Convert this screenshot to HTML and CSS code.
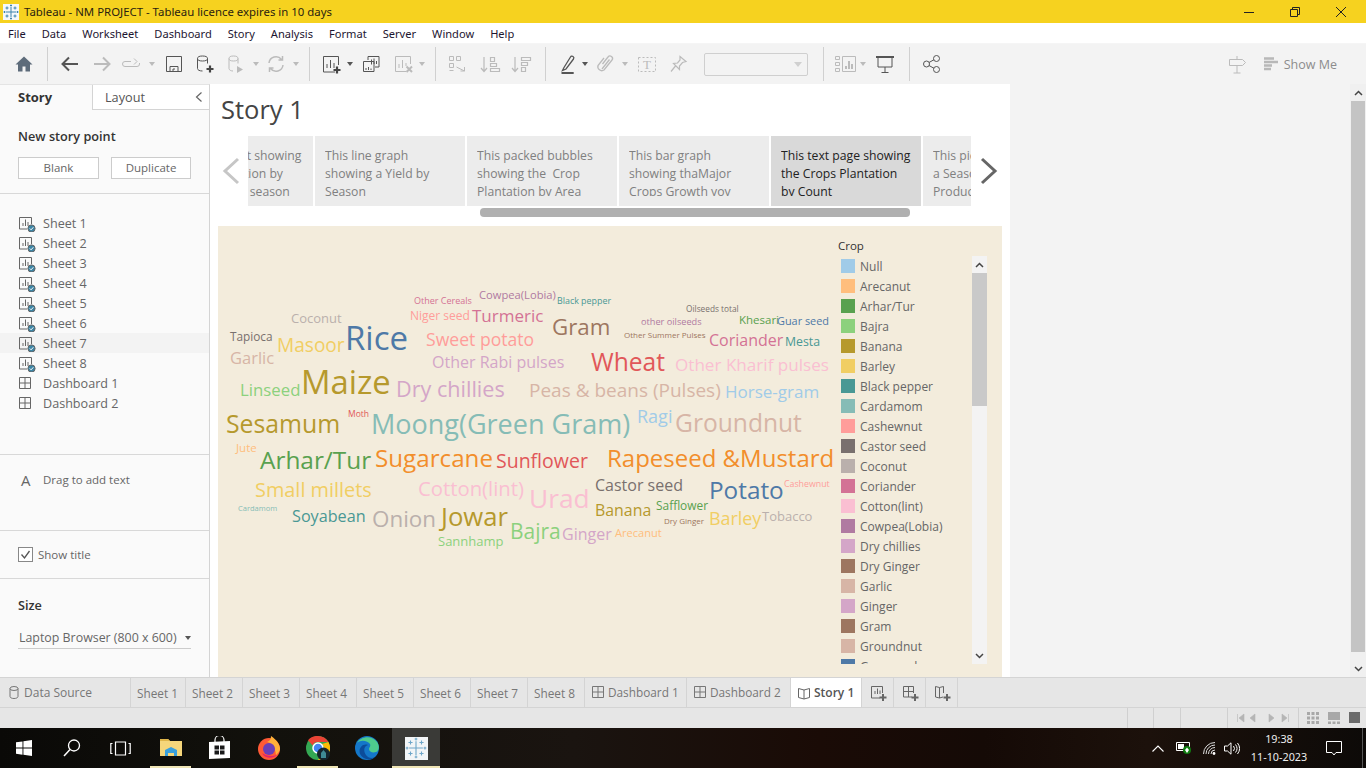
FILE: index.html
```html
<!DOCTYPE html>
<html lang="en">
<head>
<meta charset="utf-8">
<title>Tableau - NM PROJECT</title>
<link rel="stylesheet" href="styles.css">
</head>
<body>
<svg class="defs" aria-hidden="true">
  <symbol id="logo" viewBox="0 0 16 16">
    <path d="M8 3v10M3 8h10M8 0.5v2M7 1.5h2M8 13.5v2M7 14.5h2M0.5 8h2M1.5 7v2M13.5 8h2M14.5 7v2M4 2.5v3M2.500 4h3M12 2.500v3M10.500 4h3M4 10.500v3M2.500 12h3M12 10.500v3M10.500 12h3"/>
  </symbol>
  <symbol id="sheet" viewBox="0 0 18 18">
    <path d="M9 15H1.500V3.500h12V10M5 12V9M7.500 12V5.500M10 12V8" fill="none" stroke="#666"/>
    <circle cx="13.500" cy="14.500" r="3.600" fill="#3d85a5"/>
    <path d="M11.800 14.500l1.300 1.300 2.200-2.500" fill="none" stroke="#fff" stroke-width="1"/>
  </symbol>
  <symbol id="dash" viewBox="0 0 14 14">
    <path d="M1.500 1.500h11v11h-11zM7 1.500v11M1.500 7h11" fill="none"/>
  </symbol>
</svg>

<header class="titlebar">
  <svg class="logo-sm" width="16" height="16"><use href="#logo"/></svg>
  <span class="title-text">Tableau - NM PROJECT - Tableau licence expires in 10 days</span>
  <div class="winbtns">
    <span class="winbtn"><svg width="12" height="12"><path d="M1 6.500h10" stroke="#222" fill="none"/></svg></span>
    <span class="winbtn"><svg width="12" height="12"><path d="M1.500 3.500h7v7h-7zM3.500 3.500v-2h7v7h-2" stroke="#222" fill="none"/></svg></span>
    <span class="winbtn"><svg width="12" height="12"><path d="M1 1l10 10M11 1L1 11" stroke="#222" fill="none"/></svg></span>
  </div>
</header>

<nav class="menubar">
  <span>File</span><span>Data</span><span>Worksheet</span><span>Dashboard</span><span>Story</span><span>Analysis</span><span>Format</span><span>Server</span><span>Window</span><span>Help</span>
</nav>

<div class="toolbar">
  <span class="tb w32 first"><svg width="24" height="24"><path d="M12 4.500L3.500 12.500H6V19.500h4.500v-5h3v5H18V12.500h2.500z" fill="#5d6b7a"/></svg></span>
  <i class="sep s7"></i>
  <span class="tb w32 g6"><svg class="on" width="24" height="24"><path d="M20 12H4.500M11 5.500L4.500 12l6.500 6.500" stroke-width="2"/></svg></span>
  <span class="tb w32"><svg class="off" width="24" height="24"><path d="M4 12h15.500M13 5.500l6.500 6.500-6.500 6.500" stroke-width="2"/></svg></span>
  <span class="tb w26"><svg class="off" width="24" height="24"><path d="M12 9.500H6a2.500 2.500 0 0 0 0 5h12a2.500 2.500 0 0 0 2.500-2.500v-1M15 6.500l3 3-3 3"/></svg></span>
  <span class="tb w16"><i class="caret off-c"></i></span>
  <span class="tb w28"><svg class="on" width="24" height="24"><path d="M4.500 4.500h15v15h-15zM8 19.500v-5h8v5M11 19.500v-2.500h2"/></svg></span>
  <span class="tb w34"><svg class="on" width="24" height="24"><path d="M4.500 6.500v10c0 1.500 2 2.500 5 2.500M14.500 6.500v5"/><ellipse cx="9.500" cy="6.500" rx="5" ry="2.500"/><path class="thick" d="M17 13.500v7M13.500 17h7"/></svg></span>
  <span class="tb w26"><svg class="off" width="24" height="24"><path d="M6 6.500v10c0 1.500 2 2.500 4 2.500M15 6.500v5"/><ellipse cx="10.500" cy="6.500" rx="4.500" ry="2.500"/><path class="fillc" d="M14 14l6 3.500-6 3.500z"/></svg></span>
  <span class="tb w16"><i class="caret off-c"></i></span>
  <span class="tb w24"><svg class="off" width="24" height="24"><path d="M5 11a7 7 0 0 1 12.500-3.500M19 13a7 7 0 0 1-12.500 3.500M18.500 4v4h-4M5.500 20v-4h4" stroke-width="1.500"/></svg></span>
  <span class="tb w16"><i class="caret off-c"></i></span>
  <i class="sep s5"></i>
  <span class="tb w34 ml4"><svg class="on" width="24" height="24"><path d="M16 20H4.500V4.500h15V13M8 16v-4M11.500 16V8M15 16v-5"/><path class="thick" d="M18 14.500v7M14.500 18h7"/></svg></span>
  <span class="tb w4"><i class="caret on-c"></i></span>
  <span class="tb w38"><svg class="on" width="24" height="24"><path d="M9 8V4.500h11V15h-4M4.500 9.500H15v10H4.500zM12.500 12.500v-5M15 12V6.500M17.500 12V9M7 18v-2M9.500 18v-3M12 18v-1.500"/></svg></span>
  <span class="tb w26"><svg class="off" width="24" height="24"><path d="M15 19.500H4.500v-15h15V12M8 16v-4M11.500 16V8M15 14v-3"/><path stroke-width="2" d="M15.500 14.500l5.500 5.500M21 14.500L15.500 20"/></svg></span>
  <span class="tb w12"><i class="caret off-c"></i></span>
  <i class="sep s7"></i>
  <span class="tb w42"><svg class="off" width="24" height="24"><path d="M4.500 4.500h4v4h-4zM11.500 4.500h4v4h-4zM4.500 11.500h4v4h-4zM4.500 18.500h4M11.500 15l8 4M19.500 19v-4M19.500 19h-4"/></svg></span>
  <span class="tb w24"><svg class="off" width="24" height="24"><path d="M6 5v14M3 16l3 3.500L9 16M12.500 5.500h4v4h-4zM12.500 11.500h6v3h-6zM12.500 16.500h9v3h-9z" stroke-width="1.200"/></svg></span>
  <span class="tb w38"><svg class="off" width="24" height="24"><path d="M6 5v14M3 16l3 3.500L9 16M12.500 5.500h9v3h-9zM12.500 10.500h6v3h-6zM12.500 15.500h4v4h-4z" stroke-width="1.200"/></svg></span>
  <i class="sep s5"></i>
  <span class="tb w28 ml8"><svg class="on" width="24" height="24"><path d="M8 15.500l-1.500 3 3.500-1.500L17.500 7a1.800 1.800 0 0 0-3-2zM6 21h11.500" stroke-width="1.300"/><path d="M5.500 21h12" stroke-width="2"/></svg></span>
  <span class="tb w6"><i class="caret on-c"></i></span>
  <span class="tb w34"><svg class="off" width="24" height="24"><path d="M9.500 12L15 5a2.500 2.500 0 0 1 4 3l-8 10a4 4 0 0 1-6-4.500L11 6M9 17l7.500-9.500" stroke-width="1.300"/></svg></span>
  <span class="tb w6"><i class="caret off-c"></i></span>
  <span class="tb w38"><svg class="off" width="24" height="24"><path d="M3.500 5.500h17v14h-17z" stroke-dasharray="2 2"/><text x="12" y="17" class="t-icon">T</text></svg></span>
  <span class="tb w22"><svg class="off" width="24" height="24"><path d="M14 4.500l6 5-3.500 1-3 3.500 0 3.500-6-6 4-.5 2.500-3zM9.500 14L5 19.500" stroke-width="1.200"/></svg></span>
  <div class="fake-select"><i class="caret sel-c"></i></div>
  <i class="sep s15"></i>
  <span class="tb w24 ml10"><svg class="off" width="24" height="24"><path d="M1.500 4.500h4v3h-4zM1.500 10.500h4v3h-4zM1.500 16.500h4v3h-4zM8.500 4.500h13v15h-13z"/><path stroke-width="2" d="M12 17v-3M15 17V9M18 17v-5"/></svg></span>
  <span class="tb w10"><i class="caret off-c"></i></span>
  <span class="tb w34"><svg class="on" width="24" height="24"><path d="M3 5h18" stroke-width="2"/><path d="M5 5v10h14V5M12 15v5M8.500 20.500h7"/></svg></span>
  <i class="sep s7"></i>
  <span class="tb w44"><svg class="on" width="24" height="24"><circle cx="6.500" cy="12" r="3"/><circle cx="16.500" cy="6.500" r="3"/><circle cx="16.500" cy="17.500" r="3"/><path d="M9 10.500l5-2.800M9 13.500l5 2.800"/></svg></span>
  <div class="tb-right">
    <span class="tb w24"><svg class="off" width="24" height="24"><path d="M4.500 7.500h13l3 3-3 3h-13zM12 4v3.500M12 13.500V21M8.500 21h7"/></svg></span>
    <span class="showme"><svg width="14" height="14"><path d="M0 1.500h10M0 5h14M0 8.500h8M0 12h7" stroke="#b8b8b8" stroke-width="2.500" fill="none"/></svg>Show Me</span>
  </div>
</div>

<main class="workspace">
  <aside class="sidebar">
    <div class="side-tabs">
      <span class="side-tab active">Story</span>
      <span class="side-tab">Layout<svg class="collapse" width="8" height="12"><path d="M6.500 1.500L1.500 6l5 4.500" stroke="#666" stroke-width="1.200" fill="none"/></svg></span>
    </div>
    <section class="side-new">
      <h2 class="side-h">New story point</h2>
      <div class="btn-row"><span class="btn b-blank">Blank</span><span class="btn b-dup">Duplicate</span></div>
    </section>
    <section class="side-list">
      <div class="row"><span class="sh"><svg width="18" height="18"><use href="#sheet"/></svg></span>Sheet 1</div>
      <div class="row"><span class="sh"><svg width="18" height="18"><use href="#sheet"/></svg></span>Sheet 2</div>
      <div class="row"><span class="sh"><svg width="18" height="18"><use href="#sheet"/></svg></span>Sheet 3</div>
      <div class="row"><span class="sh"><svg width="18" height="18"><use href="#sheet"/></svg></span>Sheet 4</div>
      <div class="row"><span class="sh"><svg width="18" height="18"><use href="#sheet"/></svg></span>Sheet 5</div>
      <div class="row"><span class="sh"><svg width="18" height="18"><use href="#sheet"/></svg></span>Sheet 6</div>
      <div class="row hover"><span class="sh"><svg width="18" height="18"><use href="#sheet"/></svg></span>Sheet 7</div>
      <div class="row"><span class="sh"><svg width="18" height="18"><use href="#sheet"/></svg></span>Sheet 8</div>
      <div class="row"><span class="sh"><svg width="14" height="14"><use href="#dash"/></svg></span>Dashboard 1</div>
      <div class="row"><span class="sh"><svg width="14" height="14"><use href="#dash"/></svg></span>Dashboard 2</div>
    </section>
    <section class="side-text"><span class="big-a">A</span>Drag to add text</section>
    <section class="side-show"><span class="check"><svg width="13" height="13"><path d="M2.500 6.500l3 3.500 5-7" stroke="#555" stroke-width="1.300" fill="none"/></svg></span>Show title</section>
    <section class="side-size">
      <h2 class="side-h">Size</h2>
      <div class="size-select">Laptop Browser (800 x 600)<i class="caret on-c"></i></div>
    </section>
  </aside>

  <section class="story">
    <h1 class="story-title">Story 1</h1>
    <div class="story-nav">
      <svg class="nav-l" width="18" height="28"><path d="M16 2L3 14l13 12" stroke="#c6c6c6" stroke-width="3" fill="none"/></svg>
      <div class="points-wrap">
        <div class="points">
          <div class="point"><p>This bar chart showing<br>Crop Production by<br>Crop Area by season</p></div>
          <div class="point"><p>This line graph<br>showing a Yield by<br>Season</p></div>
          <div class="point"><p>This packed bubbles<br>showing the&nbsp; Crop<br>Plantation by Area</p></div>
          <div class="point"><p>This bar graph<br>showing thaMajor<br>Crops Growth yoy</p></div>
          <div class="point current"><p>This text page showing<br>the Crops Plantation<br>by Count</p></div>
          <div class="point"><p>This pie chart showing<br>a Seasonal Crop<br>Production</p></div>
        </div>
        <div class="hbar"><i></i></div>
      </div>
      <svg class="nav-r" width="18" height="28"><path d="M2 2l13 12L2 26" stroke="#666" stroke-width="3" fill="none"/></svg>
    </div>
    <div class="canvas">
      <div class="cloud">
        <span class="w c-cori" style="left:196px;top:74px;font-size:9px">Other Cereals</span>
        <span class="w c-cowp" style="left:261px;top:69px;font-size:11.200px">Cowpea(Lobia)</span>
        <span class="w c-teal" style="left:339px;top:75px;font-size:8.900px">Black pepper</span>
        <span class="w c-grey" style="left:468px;top:83px;font-size:8.300px">Oilseeds total</span>
        <span class="w c-coco" style="left:73px;top:92px;font-size:13px">Coconut</span>
        <span class="w c-cash" style="left:192px;top:90px;font-size:12px">Niger seed</span>
        <span class="w c-cori" style="left:254px;top:89px;font-size:17px">Turmeric</span>
        <span class="w c-brown" style="left:334px;top:101px;font-size:22.300px">Gram</span>
        <span class="w c-cowp" style="left:423px;top:96px;font-size:9.200px">other oilseeds</span>
        <span class="w c-brown" style="left:406px;top:109px;font-size:8px">Other Summer Pulses</span>
        <span class="w c-green" style="left:521px;top:94px;font-size:11.500px">Khesari</span>
        <span class="w c-blue" style="left:559px;top:95px;font-size:10.900px">Guar seed</span>
        <span class="w c-grey" style="left:12px;top:111px;font-size:11.800px">Tapioca</span>
        <span class="w c-blue" style="left:127px;top:111px;font-size:33px">Rice</span>
        <span class="w c-barley" style="left:59px;top:120px;font-size:19.100px">Masoor</span>
        <span class="w c-cash" style="left:208px;top:114px;font-size:17.600px">Sweet potato</span>
        <span class="w c-cori" style="left:491px;top:114px;font-size:16px">Coriander</span>
        <span class="w c-teal" style="left:567px;top:116px;font-size:12.300px">Mesta</span>
        <span class="w c-tan" style="left:12px;top:132px;font-size:16.500px">Garlic</span>
        <span class="w c-mauve" style="left:214px;top:136px;font-size:16px">Other Rabi pulses</span>
        <span class="w c-red" style="left:373px;top:136px;font-size:24.600px">Wheat</span>
        <span class="w c-pink" style="left:457px;top:139px;font-size:17.100px">Other Kharif pulses</span>
        <span class="w c-lime" style="left:22px;top:164px;font-size:16.800px">Linseed</span>
        <span class="w c-gold" style="left:83px;top:156px;font-size:32.800px">Maize</span>
        <span class="w c-mauve" style="left:178px;top:163px;font-size:21.600px">Dry chillies</span>
        <span class="w c-tan" style="left:311px;top:164px;font-size:19px">Peas &amp; beans (Pulses)</span>
        <span class="w c-sky" style="left:507px;top:165px;font-size:17px">Horse-gram</span>
        <span class="w c-gold" style="left:8px;top:197px;font-size:24.800px">Sesamum</span>
        <span class="w c-red" style="left:130px;top:188px;font-size:8.500px">Moth</span>
        <span class="w c-sage" style="left:153px;top:197px;font-size:27px">Moong(Green Gram)</span>
        <span class="w c-sky" style="left:419px;top:190px;font-size:18px">Ragi</span>
        <span class="w c-tan" style="left:457px;top:197px;font-size:24.600px">Groundnut</span>
        <span class="w c-peach" style="left:18px;top:222px;font-size:11.500px">Jute</span>
        <span class="w c-green" style="left:42px;top:234px;font-size:24.400px">Arhar/Tur</span>
        <span class="w c-orange" style="left:157px;top:232px;font-size:24.200px">Sugarcane</span>
        <span class="w c-red" style="left:278px;top:235px;font-size:19.500px">Sunflower</span>
        <span class="w c-orange" style="left:389px;top:232px;font-size:24px">Rapeseed &amp;Mustard</span>
        <span class="w c-barley" style="left:37px;top:264px;font-size:19.900px">Small millets</span>
        <span class="w c-pink" style="left:200px;top:262px;font-size:20.300px">Cotton(lint)</span>
        <span class="w c-pink" style="left:311px;top:272px;font-size:26.300px">Urad</span>
        <span class="w c-grey" style="left:377px;top:259px;font-size:16px">Castor seed</span>
        <span class="w c-blue" style="left:491px;top:264px;font-size:24.300px">Potato</span>
        <span class="w c-cash" style="left:566px;top:258px;font-size:8.800px">Cashewnut</span>
        <span class="w c-sage" style="left:20px;top:283px;font-size:7.500px">Cardamom</span>
        <span class="w c-teal" style="left:74px;top:290px;font-size:16.200px">Soyabean</span>
        <span class="w c-coco" style="left:154px;top:293px;font-size:22.400px">Onion</span>
        <span class="w c-gold" style="left:223px;top:291px;font-size:25.700px">Jowar</span>
        <span class="w c-green" style="left:438px;top:280px;font-size:11.900px">Safflower</span>
        <span class="w c-gold" style="left:377px;top:285px;font-size:15.900px">Banana</span>
        <span class="w c-brown" style="left:446px;top:295px;font-size:8px">Dry Ginger</span>
        <span class="w c-barley" style="left:491px;top:293px;font-size:17.900px">Barley</span>
        <span class="w c-coco" style="left:544px;top:290px;font-size:13px">Tobacco</span>
        <span class="w c-lime" style="left:292px;top:305px;font-size:21px">Bajra</span>
        <span class="w c-mauve" style="left:344px;top:308px;font-size:16px">Ginger</span>
        <span class="w c-peach" style="left:397px;top:307px;font-size:11.100px">Arecanut</span>
        <span class="w c-lime" style="left:220px;top:315px;font-size:13px">Sannhamp</span>
      </div>
      <div class="legend">
        <div class="legend-title">Crop</div>
        <div class="legend-body">
          <ul class="legend-list">
            <li><i class="s-sky"></i>Null</li>
            <li><i class="s-peach"></i>Arecanut</li>
            <li><i class="s-green"></i>Arhar/Tur</li>
            <li><i class="s-lime"></i>Bajra</li>
            <li><i class="s-gold"></i>Banana</li>
            <li><i class="s-barley"></i>Barley</li>
            <li><i class="s-teal"></i>Black pepper</li>
            <li><i class="s-sage"></i>Cardamom</li>
            <li><i class="s-cash"></i>Cashewnut</li>
            <li><i class="s-grey"></i>Castor seed</li>
            <li><i class="s-coco"></i>Coconut</li>
            <li><i class="s-cori"></i>Coriander</li>
            <li><i class="s-pink"></i>Cotton(lint)</li>
            <li><i class="s-cowp"></i>Cowpea(Lobia)</li>
            <li><i class="s-mauve"></i>Dry chillies</li>
            <li><i class="s-brown"></i>Dry Ginger</li>
            <li><i class="s-tan"></i>Garlic</li>
            <li><i class="s-mauve"></i>Ginger</li>
            <li><i class="s-brown"></i>Gram</li>
            <li><i class="s-tan"></i>Groundnut</li>
            <li><i class="s-blue"></i>Guar seed</li>
          </ul>
          <div class="vbar">
            <span class="vbtn"><svg width="9" height="6"><path d="M1 5l3.500-3.500L8 5" stroke="#444" stroke-width="1.500" fill="none"/></svg></span>
            <div class="vtrack"><i></i></div>
            <span class="vbtn"><svg width="9" height="6"><path d="M1 1l3.500 3.500L8 1" stroke="#444" stroke-width="1.500" fill="none"/></svg></span>
          </div>
        </div>
      </div>
    </div>
  </section>

  <div class="gutter">
    <span class="gbtn"><svg width="9" height="6"><path d="M1 5l3.500-3.500L8 5" stroke="#444" stroke-width="1.500" fill="none"/></svg></span>
    <div class="gtrack"><i></i></div>
    <span class="gbtn"><svg width="9" height="6"><path d="M1 1l3.500 3.500L8 1" stroke="#444" stroke-width="1.500" fill="none"/></svg></span>
  </div>
</main>

<div class="tabbar">
  <span class="tab t-ds"><svg width="10" height="13"><ellipse cx="5" cy="2.500" rx="4" ry="2" fill="none" stroke="#777"/><path d="M1 2.500v8c0 1 1.500 2 4 2s4-1 4-2v-8" fill="none" stroke="#777"/></svg>Data Source</span>
  <span class="tab t-s1">Sheet 1</span><span class="tab t-s">Sheet 2</span><span class="tab t-s">Sheet 3</span><span class="tab t-s">Sheet 4</span><span class="tab t-s">Sheet 5</span><span class="tab t-s">Sheet 6</span><span class="tab t-s">Sheet 7</span><span class="tab t-s">Sheet 8</span>
  <span class="tab t-d1"><svg class="dash-ic" width="14" height="14"><use href="#dash"/></svg>Dashboard 1</span>
  <span class="tab t-d2"><svg class="dash-ic" width="14" height="14"><use href="#dash"/></svg>Dashboard 2</span>
  <span class="tab t-story"><svg width="14" height="14"><path d="M1.500 2.500l5.500 1.500 5.500-1.500v9L7 13l-5.500-1.500zM7 4v9" fill="none" stroke="#666"/></svg>Story 1</span>
  <span class="tab t-new"><svg width="20" height="20"><path d="M12 15H3.500V3.500h11V10M7 11V8M9.500 11V5.500M12 11V7.500" fill="none" stroke="#666"/><path d="M15 11v7M11.500 14.500h7" stroke="#666" stroke-width="2"/></svg></span>
  <span class="tab t-new"><svg width="20" height="20"><path d="M12 14H3.500V3.500h10V10M3.500 8.500h10M8.500 3.500V14" fill="none" stroke="#666"/><path d="M15 11v7M11.500 14.500h7" stroke="#666" stroke-width="2"/></svg></span>
  <span class="tab t-new"><svg width="20" height="20"><path d="M11 14l-3.500 1L3.500 14V3.500l4 1 4-1V10M7.500 4.500V15" fill="none" stroke="#666"/><path d="M15 11v7M11.500 14.500h7" stroke="#666" stroke-width="2"/></svg></span>
</div>

<div class="statusbar">
  <i class="st-sep st1"></i><i class="st-sep st2"></i><i class="st-sep st3"></i><i class="st-sep st4"></i>
  <svg class="st-nav" width="54" height="10"><path d="M1.500 1v8M8 1L3 5l5 4zM19 1l-5 4 5 4zM33 1l5 4-5 4zM46 1l5 4-5 4zM52.500 1v8" fill="#b5b5b5" stroke="#b5b5b5" stroke-width=".6"/></svg>
  <i class="st-sep st5"></i>
  <svg class="st-v1" width="12" height="12"><path d="M0 0h3v3H0zM4.500 0h3v3h-3zM9 0h3v3H9zM0 4.500h3v3H0zM4.500 4.500h3v3h-3zM9 4.500h3v3H9zM0 9h3v3H0zM4.500 9h3v3h-3zM9 9h3v3H9z" fill="#a8a8a8"/></svg>
  <svg class="st-v2" width="12" height="12"><path d="M0 0h12v8H0zM0 9.500h3V12H0zM4.500 9.500h3V12h-3zM9 9.500h3V12H9z" fill="#a8a8a8"/></svg>
  <i class="st-v3"></i>
</div>

<footer class="taskbar">
  <span class="task t-start"><svg width="16" height="16"><path d="M0 2.300L6.500 1.400v6.200H0zM7.400 1.300L16 0v7.600H7.400zM0 8.500h6.500v6.200L0 13.800zM7.400 8.500H16V16l-8.600-1.200z" fill="#fff"/></svg></span>
  <span class="task t-search"><svg width="18" height="18"><circle cx="11" cy="6.500" r="5.500" fill="none" stroke="#fff" stroke-width="1.300"/><path d="M7 10.500L1 17" stroke="#fff" stroke-width="1.500"/></svg></span>
  <span class="task t-view"><svg width="21" height="15"><path d="M5.500 1h10v13h-10zM2.500 2.500H.8v10h1.700M18.500 2.500h1.700v10h-1.700" fill="none" stroke="#fff" stroke-width="1.200"/></svg></span>
  <span class="task t-files on-app"><svg width="22" height="20"><path d="M0 1h8l2 2h12v15H0z" fill="#f5d67b"/><path d="M0 1h8l2 2H0z" fill="#e0b64a"/><path d="M5 12h12v6h-3v-3H8v3H5z" fill="#3aa0dc"/><path d="M5 12l6-3 6 3z" fill="#3aa0dc"/></svg></span>
  <span class="task t-store"><svg width="21" height="24"><path d="M6 6V4a4 4 0 0 1 9 0v2" fill="none" stroke="#fff" stroke-width="1.200"/><path d="M0 6l21-1v17L0 23z" fill="#fff"/><path d="M5.500 9.500h4.500v4H5.500zM11 9.500h4.500v4H11zM5.500 14.500h4.500v4H5.500zM11 14.500h4.500v4H11z" fill="#1a1a1a"/></svg></span>
  <span class="task t-fox"><svg width="24" height="24"><circle cx="12" cy="13" r="11" fill="#ff5a36"/><path d="M14 0c6 4 9 9 9 13 0 2-2 4-4 6-1-8-4-12-9-13 3-1 4-3 4-6z" fill="#ffb03a"/><circle cx="12" cy="13" r="6" fill="#6b3fb8"/><path d="M5 17c3 6 11 6 15 2-5 2-11 1-15-2z" fill="#e3226c"/></svg></span>
  <span class="task t-chrome on-app"><svg width="24" height="24"><circle cx="12" cy="12" r="12" fill="#34a853"/><path d="M12 0a12 12 0 0 1 10.400 6H12a6 6 0 0 0-5.400 3.400L2 4.200A12 12 0 0 1 12 0z" fill="#ea4335"/><path d="M22.400 6A12 12 0 0 1 12 24l5-8.500A6 6 0 0 0 16 8z" fill="#fbbc05"/><circle cx="12" cy="12" r="5" fill="#4285f4" stroke="#fff" stroke-width="1.500"/><circle cx="17.500" cy="18" r="6.500" fill="#15262b"/><path d="M15 22v-5l2.500-3 2.500 3v5z" fill="#3f8c94"/></svg></span>
  <span class="task t-edge"><svg width="24" height="24"><circle cx="12" cy="12" r="12" fill="#1477c9"/><path d="M2 7C6 0 17-1 22 6c3 4 2 9-1 10-3 1-7 0-7-3 0-2 2-2 1-5-2-3-9-5-13-1z" fill="#4ecb8d"/><path d="M5 18c-2-6 3-11 8-9-4 1-5 6-2 10 2 3 6 4 9 2-4 4-12 3-15-3z" fill="#0c4c9a"/></svg></span>
  <span class="task t-tab on-app"><span class="tab-tile"><svg width="22" height="22"><use href="#logo"/></svg></span></span>
  <div class="tray">
    <svg class="tr-caret" width="12" height="7"><path d="M.5 6.500L6 1l5.500 5.500" stroke="#fff" stroke-width="1.100" fill="none"/></svg>
    <svg class="tr-bat" width="16" height="14"><path d="M.5 1.500h13v8H.5z" fill="none" stroke="#fff"/><path d="M2 3h6v5H2z" fill="#fff"/><circle cx="11" cy="9" r="4" fill="#107c10"/><path d="M11 6.500l2 2.500-2 3-2-3z" fill="#fff"/></svg>
    <svg class="tr-wifi" width="13" height="13"><path d="M.5 12A11.500 11.500 0 0 1 12 .5M3 12a9 9 0 0 1 9-9M5.500 12A6.500 6.500 0 0 1 12 5.500M8 12a4 4 0 0 1 4-4" stroke="#ddd" fill="none"/><circle cx="11" cy="11.500" r="1.400" fill="#fff"/></svg>
    <svg class="tr-vol" width="16" height="13"><path d="M.5 4h3L7 .8v11.400L3.500 9h-3z" fill="none" stroke="#fff"/><path d="M9.500 4a4 4 0 0 1 0 5M11.500 2.500a6.500 6.500 0 0 1 0 8M13.500 1a9 9 0 0 1 0 11" stroke="#fff" fill="none"/></svg>
    <div class="clock"><span>19:38</span><span>11-10-2023</span></div>
    <svg class="tr-note" width="16" height="15"><path d="M.5.500h15v11h-5.500L8 14l-2-2.500H.5z" fill="none" stroke="#fff"/></svg>
    <i class="tr-desk"></i>
  </div>
</footer>
</body>
</html>
```

FILE: styles.css
```css
* { box-sizing: border-box; }
html, body { margin: 0; padding: 0; }
body {
  width: 1366px; height: 768px; overflow: hidden;
  font-family: "Open Sans", "Noto Sans", sans-serif;
  color: #555; background: #fff;
  display: flex; flex-direction: column;
}
.defs { position: absolute; width: 0; height: 0; }
i { display: block; font-style: normal; }

/* title bar */
.titlebar { height: 23px; background: #f6d21f; display: flex; align-items: center; padding-left: 3px; color: #3a2a10; font-size: 12px; flex: none; }
.logo-sm { background: #f4f7fa; stroke: #3f84ad; stroke-width: 1; fill: none; margin-right: 5px; }
.title-text { font-family: "Noto Sans", sans-serif; font-size: 11.400px; color: #2a1d10; }
.winbtns { margin-left: auto; display: flex; padding-right: 2px; }
.winbtn { width: 46px; display: flex; align-items: center; justify-content: center; }

/* menu bar */
.menubar { height: 20px; background: #fff; display: flex; gap: 16px; align-items: center; padding-left: 8px; font-family: "Noto Sans", sans-serif; font-size: 11.100px; color: #1d1530; flex: none; }

/* toolbar */
.toolbar { height: 41px; background: #f3f3f3; display: flex; align-items: center; border-top: 1px solid #f5f5f5; flex: none; }
.tb { height: 24px; display: flex; align-items: center; justify-content: center; flex: none; }
.first { margin-left: 8px; }
.g6 { margin-left: 6px; }
.w4 { width: 4px; } .w6 { width: 6px; } .w10 { width: 10px; } .w12 { width: 12px; } .w16 { width: 16px; } .w22 { width: 22px; }
.w24 { width: 24px; } .w26 { width: 26px; } .w28 { width: 28px; } .w32 { width: 32px; } .w34 { width: 34px; } .w38 { width: 38px; }
.w42 { width: 42px; } .w44 { width: 44px; }
.sep { width: 1px; height: 34px; background: #d0d0d0; flex: none; }
.s7 { margin-left: 7px; }
.s5 { margin-left: 5px; }
.s15 { margin-left: 15px; }
.ml4 { margin-left: 4px; }
.ml8 { margin-left: 8px; }
.ml10 { margin-left: 10px; }
.toolbar svg { fill: none; }
.on { stroke: #555; }
.off { stroke: #bbb; }
.thick { stroke: #444; stroke-width: 2.2; }
.fillc { fill: #bbb; stroke: none; }
.t-icon { font-family: "Liberation Serif", serif; font-size: 13px; text-anchor: middle; fill: #bbb; stroke: none; }
.caret { width: 0; height: 0; flex: none; border-left: 3.500px solid transparent; border-right: 3.500px solid transparent; border-top: 4px solid #555; }
.on-c { border-top-color: #555; }
.off-c { border-top-color: #bbb; }
.sel-c { border-left-width: 4px; border-right-width: 4px; border-top: 5px solid #d0d0d0; }
.fake-select { width: 104px; height: 23px; margin-left: 16px; border: 1px solid #cfcfcf; border-radius: 2px; display: flex; align-items: center; justify-content: flex-end; padding-right: 5px; flex: none; }
.tb-right { margin-left: auto; display: flex; align-items: center; padding-right: 29px; gap: 15px; }
.showme { display: flex; align-items: center; gap: 6px; font-size: 12.500px; color: #8c8c8c; }

/* workspace */
.workspace { flex: 1; min-height: 0; display: flex; background: #f3f3f3; }
.sidebar { width: 210px; flex: none; background: #fafafa; border-right: 1px solid #d4d4d4; border-top: 1px solid #e4e4e4; display: flex; flex-direction: column; font-size: 12px; }
.side-tabs { height: 25px; display: flex; flex: none; font-size: 13px; }
.side-tab { display: flex; align-items: center; position: relative; }
.side-tab.active { width: 92px; padding: 0 0 2px 18px; font-weight: 700; color: #333; }
.side-tab:not(.active) { flex: 1; padding-left: 12px; border-left: 1px solid #d4d4d4; border-bottom: 1px solid #d4d4d4; color: #555; background: #fff; font-size: 12.700px; }
.collapse { position: absolute; right: 6px; top: 6px; }
.side-h { margin: 0; font-size: 12.700px; font-weight: 600; color: #333; }
.side-new { height: 84px; border-bottom: 1px solid #d8d8d8; padding: 17px 18px 0; flex: none; }
.btn-row { display: flex; gap: 12px; margin-top: 12px; }
.btn { height: 22px; display: flex; align-items: center; justify-content: center; border: 1px solid #ccc; background: #fff; font-size: 11.500px; color: #666; padding-bottom: 1px; }
.b-blank { width: 81px; }
.b-dup { width: 80px; }
.side-list { height: 261px; padding-top: 19px; border-bottom: 1px solid #d8d8d8; flex: none; }
.row { height: 20px; display: flex; align-items: center; font-size: 12.600px; color: #666; padding-left: 18px; }
.row.hover { background: #f3f3f3; }
.sh { width: 25px; height: 18px; display: flex; align-items: center; stroke: #666; flex: none; }
.side-text { height: 76px; border-bottom: 1px solid #d8d8d8; display: flex; align-items: center; font-size: 11.500px; color: #666; padding: 0 0 26px 21px; flex: none; }
.big-a { width: 22px; font-size: 15px; color: #666; }
.side-show { height: 48px; border-bottom: 1px solid #d8d8d8; display: flex; align-items: center; font-size: 11.500px; color: #666; padding-left: 18px; flex: none; }
.check { width: 15px; height: 15px; border: 1px solid #888; background: #fff; margin-right: 5px; display: flex; align-items: center; justify-content: center; }
.side-size { padding: 17px 18px 0; flex: 1; }
.size-select { width: 173px; height: 22px; margin-top: 13px; padding-left: 1px; border-bottom: 1px solid #ccc; display: flex; align-items: center; justify-content: space-between; font-size: 12.400px; color: #666; }

/* story */
.story { width: 800px; flex: none; background: #fff; display: flex; flex-direction: column; border-top: 1px solid #fff; }
.story-title { margin: 0; height: 51px; padding: 7px 0 0 11px; font-size: 25.500px; line-height: 34px; font-weight: 400; color: #444; flex: none; }
.story-nav { height: 90px; display: flex; flex: none; position: relative; }
.nav-l { margin: 21px 0 0 12px; flex: none; }
.points-wrap { width: 723px; margin-left: 8px; overflow: hidden; flex: none; }
.nav-r { margin: 21px 0 0 9px; flex: none; }
.points { display: flex; gap: 2px; margin-left: -85px; height: 70px; }
.point { width: 150px; height: 70px; flex: none; background: #ececec; padding: 11px 10px 0; color: #808080; font-size: 12.200px; line-height: 18px; white-space: nowrap; }
.point p { margin: 0; height: 49px; overflow: hidden; }
.point.current { background: #d9d9d9; color: #222; }
.hbar { height: 20px; padding: 2px 0 0 232px; }
.hbar i { width: 430px; height: 9px; background: #b0b0b0; border-radius: 4px; }

/* canvas */
.canvas { flex: 1; min-height: 0; margin-left: 8px; width: 784px; background: #f3ecdc; display: flex; overflow: hidden; }
.cloud { width: 620px; position: relative; flex: none; }
.w { position: absolute; white-space: nowrap; line-height: 1; transform: translateY(-50%); }
.c-blue { color: #4e79a7; } .c-teal { color: #499894; } .c-grey { color: #79706e; } .c-coco { color: #bab0ac; }
.c-cash { color: #ff9d9a; } .c-cori { color: #d37295; } .c-brown { color: #9d7660; } .c-cowp { color: #b07aa1; }
.c-green { color: #59a14f; } .c-barley { color: #f1ce63; } .c-tan { color: #d7b5a6; } .c-mauve { color: #d4a6c8; }
.c-red { color: #e15759; } .c-pink { color: #fabfd2; } .c-lime { color: #8cd17d; } .c-gold { color: #b6992d; }
.c-sky { color: #a0cbe8; } .c-sage { color: #86bcb6; } .c-peach { color: #ffbe7d; } .c-orange { color: #f28e2b; }
.legend { flex: 1; min-width: 0; }
.legend-title { height: 30px; padding: 13px 0 0 0; font-size: 11.500px; line-height: 14px; color: #333; }
.legend-body { display: flex; height: 408px; }
.legend-list { list-style: none; margin: 0; padding: 0 0 0 3px; width: 134px; height: 408px; overflow: hidden; flex: none; }
.legend-list li { height: 20px; display: flex; align-items: center; font-size: 12px; color: #666; }
.legend-list i { width: 14px; height: 14px; margin-right: 5px; flex: none; }
.s-blue { background: #4e79a7; } .s-teal { background: #499894; } .s-grey { background: #79706e; } .s-coco { background: #bab0ac; }
.s-cash { background: #ff9d9a; } .s-cori { background: #d37295; } .s-brown { background: #9d7660; } .s-cowp { background: #b07aa1; }
.s-green { background: #59a14f; } .s-barley { background: #f1ce63; } .s-tan { background: #d7b5a6; } .s-mauve { background: #d4a6c8; }
.s-pink { background: #fabfd2; } .s-lime { background: #8cd17d; } .s-gold { background: #b6992d; }
.s-sky { background: #a0cbe8; } .s-sage { background: #86bcb6; } .s-peach { background: #ffbe7d; }
.vbar { width: 15px; height: 408px; background: #f3f3f3; display: flex; flex-direction: column; flex: none; }
.vbtn { height: 17px; display: flex; align-items: center; justify-content: center; flex: none; }
.vtrack { flex: 1; }
.vtrack i { width: 15px; height: 133px; background: #c9c9c9; }

/* right area */
.gutter { width: 16px; margin-left: auto; background: #f0f0f0; display: flex; flex-direction: column; flex: none; }
.gbtn { height: 17px; display: flex; align-items: center; justify-content: center; flex: none; }
.gtrack { flex: 1; }
.gtrack i { width: 14px; margin-left: 1px; height: 551px; background: #c4c4c4; }

/* tabs */
.tabbar { height: 31px; flex: none; background: #e6e6e6; border-top: 1px solid #d4d4d4; border-bottom: 1px solid #d4d4d4; display: flex; font-size: 11.800px; color: #777; }
.tab { height: 29px; display: flex; align-items: center; border-right: 1px solid #d4d4d4; flex: none; white-space: nowrap; }
.t-ds { width: 131px; padding-left: 9px; gap: 5px; font-size: 12px; }
.t-s1 { width: 55px; padding-left: 6px; }
.t-s { width: 57px; padding-left: 6px; }
.t-d1 { width: 102px; padding: 0 0 1px 6px; gap: 3px; }
.t-d2 { width: 104px; padding: 0 0 1px 6px; gap: 3px; }
.dash-ic { stroke: #777; }
.t-story { width: 71px; background: #fff; padding-left: 6px; gap: 3px; font-weight: 600; color: #555; font-size: 12px; }
.t-new { width: 32px; justify-content: center; }

/* status */
.statusbar { height: 20px; flex: none; background: #e6e6e6; position: relative; }
.st-sep { position: absolute; top: 0; bottom: 0; width: 1px; background: #d0d0d0; }
.st1 { left: 1127px; } .st2 { left: 1153px; } .st3 { left: 1180px; } .st4 { left: 1227px; } .st5 { left: 1298px; }
.st-nav { position: absolute; left: 1236px; top: 5px; }
.st-v1 { position: absolute; left: 1307px; top: 4px; }
.st-v2 { position: absolute; left: 1328px; top: 4px; }
.st-v3 { position: absolute; left: 1349px; top: 4px; width: 11px; height: 11px; background: #6b6b6b; }

/* taskbar */
.taskbar { height: 40px; flex: none; position: relative; display: flex; color: #fff; background: linear-gradient(90deg, #0a0907 0%, #12110c 20%, #1a1410 42%, #1a0b06 60%, #150a06 72%, #1c110b 84%, #0d0a08 100%); }
.task { height: 40px; display: flex; align-items: center; justify-content: center; flex: none; position: relative; }
.t-start { width: 48px; }
.t-search { width: 48px; }
.t-view { width: 48px; }
.t-files { width: 49px; margin-left: 2px; }
.t-store { width: 49px; }
.t-fox { width: 49px; }
.t-chrome { width: 49px; }
.t-edge { width: 49px; }
.t-tab { width: 48px; background: #3a3a37; margin-left: 1px; }
.on-app::after { content: ""; position: absolute; left: 4px; right: 4px; bottom: 0; height: 2px; background: #efe5b5; }
.t-tab::after { left: 0; right: 0; }
.tab-tile { width: 23px; height: 23px; background: #f2f5f7; display: flex; align-items: center; justify-content: center; stroke: #6ea6c9; fill: none; stroke-width: .8; }
.tray { margin-left: auto; display: flex; align-items: center; position: relative; width: 214px; height: 40px; }
.tr-bat { margin-left: 12px; }
.tr-wifi { margin-left: 11px; }
.tr-vol { margin-left: 8px; }
.clock { margin-left: 4px; width: 70px; text-align: center; font-family: "Noto Sans", sans-serif; font-size: 10.800px; line-height: 18px; color: #eee; display: flex; flex-direction: column; }
.tr-note { margin-left: 12px; }
.tr-desk { position: absolute; right: 3px; top: 0; bottom: 0; width: 1px; background: #555; }
```
